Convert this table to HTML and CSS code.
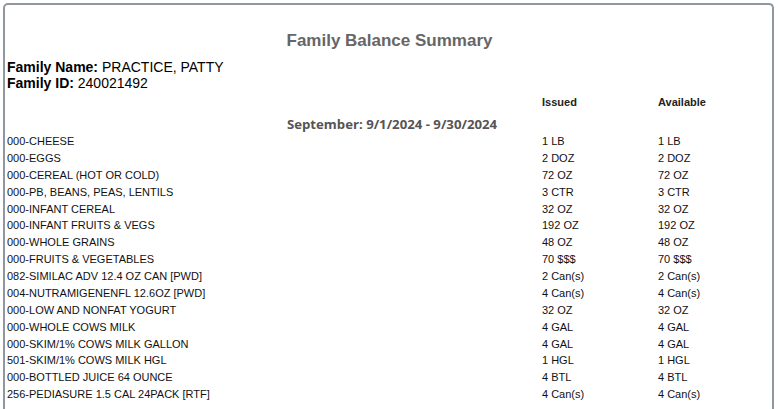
FILE: index.html
```html
<!DOCTYPE html>
<html>
<head>
<meta charset="utf-8">
<link rel="stylesheet" href="styles.css">
</head>
<body>
<div class="frame">
  <h1 class="title">Family Balance Summary</h1>
  <div class="family">
    <div class="fline"><span class="flabel">Family Name:</span> <span class="fvalue">PRACTICE, PATTY</span></div>
    <div class="fline"><span class="flabel">Family ID:</span> <span class="fvalue">240021492</span></div>
  </div>
  <div class="grid head">
    <span></span><span>Issued</span><span>Available</span>
  </div>
  <div class="period">September: 9/1/2024 - 9/30/2024</div>
  <div class="grid rows">
    <span>000-CHEESE</span><span>1 LB</span><span>1 LB</span>
    <span>000-EGGS</span><span>2 DOZ</span><span>2 DOZ</span>
    <span>000-CEREAL (HOT OR COLD)</span><span>72 OZ</span><span>72 OZ</span>
    <span>000-PB, BEANS, PEAS, LENTILS</span><span>3 CTR</span><span>3 CTR</span>
    <span>000-INFANT CEREAL</span><span>32 OZ</span><span>32 OZ</span>
    <span>000-INFANT FRUITS &amp; VEGS</span><span>192 OZ</span><span>192 OZ</span>
    <span>000-WHOLE GRAINS</span><span>48 OZ</span><span>48 OZ</span>
    <span>000-FRUITS &amp; VEGETABLES</span><span>70 $$$</span><span>70 $$$</span>
    <span>082-SIMILAC ADV 12.4 OZ CAN [PWD]</span><span>2 Can(s)</span><span>2 Can(s)</span>
    <span>004-NUTRAMIGENENFL 12.6OZ [PWD]</span><span>4 Can(s)</span><span>4 Can(s)</span>
    <span>000-LOW AND NONFAT YOGURT</span><span>32 OZ</span><span>32 OZ</span>
    <span>000-WHOLE COWS MILK</span><span>4 GAL</span><span>4 GAL</span>
    <span>000-SKIM/1% COWS MILK GALLON</span><span>4 GAL</span><span>4 GAL</span>
    <span>501-SKIM/1% COWS MILK HGL</span><span>1 HGL</span><span>1 HGL</span>
    <span>000-BOTTLED JUICE 64 OUNCE</span><span>4 BTL</span><span>4 BTL</span>
    <span>256-PEDIASURE 1.5 CAL 24PACK [RTF]</span><span>4 Can(s)</span><span>4 Can(s)</span>
  </div>
</div>
</body>
</html>
```

FILE: styles.css
```css
html, body {
  margin: 0;
  padding: 0;
  background: #ffffff;
  font-family: "Liberation Sans", Arial, sans-serif;
  color: #111111;
  overflow: hidden;
}

.frame {
  margin: 3px 0 0 3px;
  width: 763px;
  height: 420px;
  border: 2px solid #8f989f;
  border-bottom: none;
  border-radius: 5px 5px 0 0;
  padding: 0 2px;
}

.title {
  margin: 0;
  padding-top: 24px;
  padding-left: 2px;
  height: 23px;
  line-height: 23px;
  text-align: center;
  font-size: 17px;
  font-weight: bold;
  color: #666666;
}

.family {
  margin-top: 7px;
  font-size: 14px;
  line-height: 16px;
  color: #000;
}

.flabel {
  font-weight: bold;
}

.grid {
  display: grid;
  grid-template-columns: 535px 116px 1fr;
  font-size: 11px;
}

.head {
  margin-top: 4px;
  line-height: 14px;
  font-weight: bold;
  color: #222;
}

.period {
  margin-top: 6px;
  padding-left: 7px;
  text-align: center;
  font-family: "Open Sans", sans-serif;
  font-size: 13.2px;
  font-weight: bold;
  color: #555555;
  line-height: 18px;
}

.rows {
  line-height: 16.87px;
  color: #111;
}
```
